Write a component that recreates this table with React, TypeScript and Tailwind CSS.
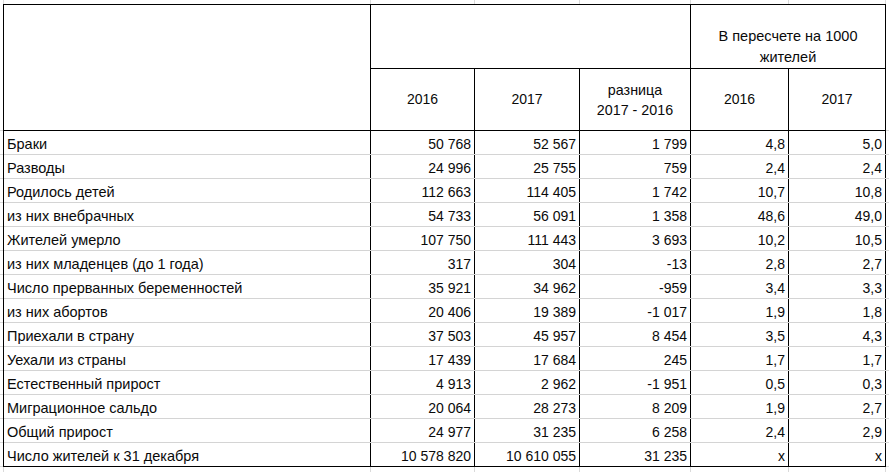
import React from "react";

const rows: [string, string, string, string, string, string][] = [
  ["Браки", "50 768", "52 567", "1 799", "4,8", "5,0"],
  ["Разводы", "24 996", "25 755", "759", "2,4", "2,4"],
  ["Родилось детей", "112 663", "114 405", "1 742", "10,7", "10,8"],
  ["из них внебрачных", "54 733", "56 091", "1 358", "48,6", "49,0"],
  ["Жителей умерло", "107 750", "111 443", "3 693", "10,2", "10,5"],
  ["из них младенцев (до 1 года)", "317", "304", "-13", "2,8", "2,7"],
  ["Число прерванных беременностей", "35 921", "34 962", "-959", "3,4", "3,3"],
  ["из них абортов", "20 406", "19 389", "-1 017", "1,9", "1,8"],
  ["Приехали в страну", "37 503", "45 957", "8 454", "3,5", "4,3"],
  ["Уехали из страны", "17 439", "17 684", "245", "1,7", "1,7"],
  ["Естественный прирост", "4 913", "2 962", "-1 951", "0,5", "0,3"],
  ["Миграционное сальдо", "20 064", "28 273", "8 209", "1,9", "2,7"],
  ["Общий прирост", "24 977", "31 235", "6 258", "2,4", "2,9"],
  ["Число жителей к 31 декабря", "10 578 820", "10 610 055", "31 235", "x", "x"],
];

const widths = ["w-[367px]", "w-[104px]", "w-[105px]", "w-[111px]", "w-[98px]", "w-[97px]"];

export default function App() {
  return (
    <div
      className="relative w-[889px] h-[472px] overflow-hidden bg-white text-[14px] text-[#0a0a0a]"
      style={{ fontFamily: '"Liberation Sans", Arial, sans-serif' }}
    >
      {/* spreadsheet gridlines outside the table */}
      <div className="absolute left-0 top-0 w-[889px] h-[472px] pointer-events-none">
        {[3, 370, 474, 579, 690, 788, 885].map((x) => (
          <div key={x} className="absolute top-0 w-px h-[472px] bg-[#dadada]" style={{ left: x }} />
        ))}
        {Array.from({ length: 15 }).map((_, i) => (
          <div key={i} className="absolute left-0 w-[889px] h-px bg-[#dadada]" style={{ top: 130 + i * 24 }} />
        ))}
      </div>

      <div className="relative pt-[4px] pl-[3px]">
        <div className="w-[883px] border-l border-t border-black bg-white">
          {/* header */}
          <div className="flex">
            <div className="w-[367px] h-[126px] border-r border-b border-black" />
            <div className="flex flex-col">
              <div className="flex h-[64px]">
                <div className="w-[320px] border-r border-b border-black" />
                <div className="w-[195px] border-r border-b border-black flex items-end justify-center text-center text-[14.5px] leading-[21px]">
                  В пересчете на 1000
                  <br />
                  жителей
                </div>
              </div>
              <div className="flex h-[62px]">
                <div className="w-[104px] border-r border-b border-black flex items-center justify-center">2016</div>
                <div className="w-[105px] border-r border-b border-black flex items-center justify-center">2017</div>
                <div className="w-[111px] border-r border-b border-black flex items-center justify-center text-center leading-[20px] text-[14.3px]">
                  разница
                  <br />
                  2017 - 2016
                </div>
                <div className="w-[98px] border-r border-b border-black flex items-center justify-center">2016</div>
                <div className="w-[97px] border-r border-b border-black flex items-center justify-center">2017</div>
              </div>
            </div>
          </div>
          {/* data */}
          {rows.map((r, ri) => (
            <div
              key={ri}
              className={
                "flex h-[24px] border-b " +
                (ri === rows.length - 1 ? "border-black" : "border-[#d4d4d4]")
              }
            >
              {r.map((c, ci) => (
                <div
                  key={ci}
                  className={
                    widths[ci] +
                    " border-r border-black flex items-end leading-[16px] pb-[2px] px-[3px] whitespace-nowrap " +
                    (ci === 0 ? "justify-start text-[14.5px]" : "justify-end")
                  }
                >
                  {c}
                </div>
              ))}
            </div>
          ))}
        </div>
      </div>
    </div>
  );
}
